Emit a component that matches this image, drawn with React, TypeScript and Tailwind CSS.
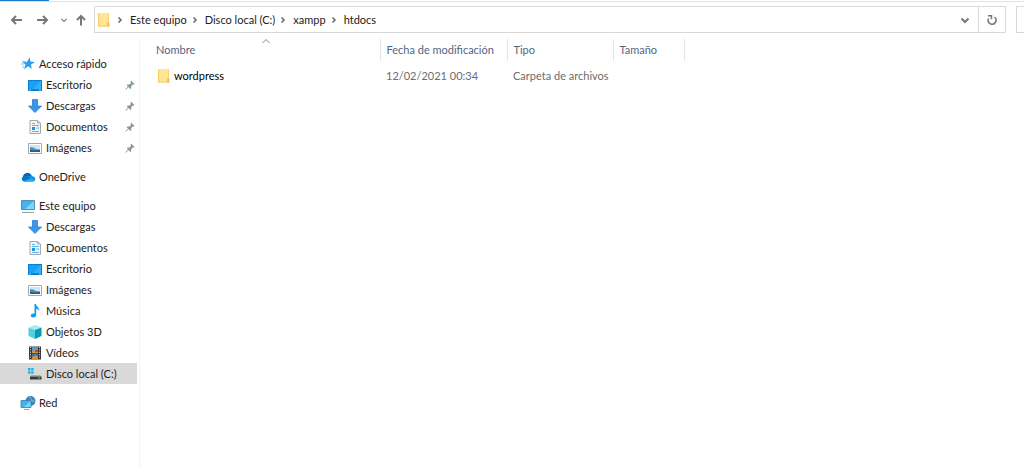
import React from 'react';

type IconName =
  | 'star' | 'desktop' | 'download' | 'document' | 'picture' | 'cloud' | 'computer'
  | 'music' | 'cube' | 'video' | 'drive' | 'network' | 'folder';

interface NavItem {
  label: string;
  icon: IconName;
  pinned?: boolean;
  selected?: boolean;
}

interface NavGroup {
  root: NavItem;
  items: NavItem[];
}

const groups: NavGroup[] = [
  {
    root: { label: 'Acceso rápido', icon: 'star' },
    items: [
      { label: 'Escritorio', icon: 'desktop', pinned: true },
      { label: 'Descargas', icon: 'download', pinned: true },
      { label: 'Documentos', icon: 'document', pinned: true },
      { label: 'Imágenes', icon: 'picture', pinned: true },
    ],
  },
  { root: { label: 'OneDrive', icon: 'cloud' }, items: [] },
  {
    root: { label: 'Este equipo', icon: 'computer' },
    items: [
      { label: 'Descargas', icon: 'download' },
      { label: 'Documentos', icon: 'document' },
      { label: 'Escritorio', icon: 'desktop' },
      { label: 'Imágenes', icon: 'picture' },
      { label: 'Música', icon: 'music' },
      { label: 'Objetos 3D', icon: 'cube' },
      { label: 'Vídeos', icon: 'video' },
      { label: 'Disco local (C:)', icon: 'drive', selected: true },
    ],
  },
  { root: { label: 'Red', icon: 'network' }, items: [] },
];

const crumbs = ['Este equipo', 'Disco local (C:)', 'xampp', 'htdocs'];

const shapes: Record<IconName, React.ReactNode> = {
  star: (
    <>
      <path d="M9.800 1.500l.7 4.100 4.500.6-4 2.300.8 4.500-3.600-2.700-4.200 2.900 1.600-4.700-3.100-2.300 4.300-.3z" fill="#2b9fea" />
      <path d="M2 5.500h3.500M1 8h3M2 11h2" stroke="#74c3f5" />
    </>
  ),
  desktop: (
    <>
      <path d="M1 3h14v11H1z" fill="#087fd3" />
      <path d="M2 4h12v8H2z" fill="#1ba1f3" />
      <path d="M14 4v8H6z" fill="#35b1fa" />
      <path d="M2 13h2M12 13h2" stroke="#8ad4ff" />
    </>
  ),
  download: <path d="M5.500 1.500h5V8h4L8 14.500 1.500 8h4z" fill="#3a96e8" stroke="#2581d2" strokeWidth=".8" />,
  document: (
    <>
      <path d="M3 1.500h7.500L13.500 4v10.500H3z" fill="#f1f5f8" stroke="#a2aab0" />
      <path d="M10.500 1.500V4h3" fill="none" stroke="#a2aab0" />
      <path d="M5 4.500h3M5 6.500h7M9 9H12M5 12.500h7" stroke="#5fb7e8" />
      <path d="M5 8h3v3H5z" fill="#2790d2" />
    </>
  ),
  picture: (
    <>
      <path d="M1.500 3.500h13v10h-13z" fill="#fff" stroke="#a2a8ad" />
      <path d="M3 5h10v7H3z" fill="#cfe6f5" />
      <path d="M3 7l3 .5L9 9l4 .5V12H3z" fill="#4b8fb8" />
      <path d="M3 10l5 .5 5-.5v2H3z" fill="#245d86" />
    </>
  ),
  cloud: (
    <>
      <path d="M3 9a4.500 4.500 0 018-3.500L13 9z" fill="#0c64bd" />
      <path d="M4 7.500a3 3 0 00-.2 5h8.700a2.500 2.500 0 00.4-5 3.800 3.800 0 00-4-.3z" fill="#1590df" />
      <path d="M3 7.500A2.700 2.700 0 003 12h3l5-2.500-4-2.400z" fill="#0875cc" />
      <path d="M4 12.200L11 9l3.800 2c-.6 1-1.300 1.500-2.300 1.500H4z" fill="#28a8ea" />
    </>
  ),
  computer: (
    <>
      <path d="M1.500 2.500h13v9h-13z" fill="#42b4f0" stroke="#5c8eaa" />
      <path d="M14 3v8H5z" fill="#82d4fa" />
      <path d="M2 14.500h12" stroke="#8ba3b2" />
    </>
  ),
  music: <path d="M7.500 1H9c.3 2.700 3.800 3.400 3.200 7.500-.6-1.700-1.700-2.400-3-2.700v6c0 1.700-1.200 2.800-3 2.800-1.500 0-2.400-.8-2.400-2 0-1.500 1.700-2.500 3.700-2.100z" fill="#149bf0" />,
  cube: (
    <>
      <path d="M1.500 3.500L8 1l6.500 2.500L8 6z" fill="#a4edf3" />
      <path d="M1.500 3.500L8 6v9l-6.500-3z" fill="#55cfde" />
      <path d="M14.500 3.500L8 6v9l6.500-3z" fill="#079bb5" />
    </>
  ),
  video: (
    <>
      <path d="M2 1.500h12v13H2z" fill="#353b40" />
      <path d="M5 2h6v6H5z" fill="#5097dc" />
      <path d="M5 8.500h6V14H5z" fill="#3574ae" />
      <path d="M5 6l3-2 3 3v1H5zM5 12l4-2 2 2v2H5z" fill="#d39335" />
      <path d="M8 5h3v2H8z" fill="#bd4d3c" />
      <path d="M3.500 2v12M12.500 2v12" stroke="#d5dade" strokeDasharray="1 1.400" />
    </>
  ),
  drive: (
    <>
      <path d="M1 2h2.500v2.500H1zM4.200 2h2.500v2.500H4.200zM1 5.200h2.500v2.500H1zM4.200 5.200h2.500v2.500H4.200z" fill="#18b5ed" />
      <path d="M4 9h9l1.500 1.500H3z" fill="#a9adb0" />
      <path d="M3 10.500h11.500v3H3z" fill="#373b3e" />
      <path d="M11 12h2" stroke="#5bd45d" />
    </>
  ),
  network: (
    <>
      <circle cx="10.500" cy="6" r="5" fill="#3a87b8" />
      <path d="M10 1.500c-1 2 3 2 1 4l3.500 1" stroke="#8fc4df" fill="none" />
      <path d="M1 5.500h10v7H1z" fill="#3fb3f1" stroke="#397eaa" strokeWidth=".8" />
      <path d="M10.500 6v6H4z" fill="#7dd1f8" />
      <path d="M4 14.500h5" stroke="#8fa7b5" />
    </>
  ),
  folder: (
    <>
      <path d="M2 1h11v13.500H2z" fill="#ffe595" />
      <path d="M2 1h1v13.500H2z" fill="#f3cf69" />
      <path d="M2 13.500h11v1H2z" fill="#f2cc61" />
      <path d="M11 10.500h2.500v4H11z" fill="#efc451" />
      <path d="M12 1h1v9.500h-1z" fill="#f7d675" />
    </>
  ),
};

function Icon({ name }: { name: IconName }) {
  return (
    <svg viewBox="0 0 16 16" className="h-4 w-4 shrink-0" aria-hidden="true">
      {shapes[name]}
    </svg>
  );
}

function Stroke({ d, className, width = 1.5 }: { d: string; className: string; width?: number }) {
  return (
    <svg viewBox="0 0 16 16" className={className} fill="none" stroke="currentColor" strokeWidth={width} aria-hidden="true">
      <path d={d} />
    </svg>
  );
}

const arrowLeft = 'M13 8H3M7 4L3 8l4 4';
const arrowRight = 'M2 8h10M8 4l4 4-4 4';
const arrowUp = 'M8 13.500V4M4 8l4-4 4 4';
const chevronDown = 'M4.500 6.500L8 10l3.500-3.500';
const chevronRight = 'M5.500 5.500L8 8l-2.500 2.500';
const chevronUp = 'M4.500 10L8 6.500l3.500 3.500';

function Pin() {
  return (
    <svg viewBox="0 0 10 10" className="ml-auto h-[10px] w-[10px] shrink-0" aria-hidden="true">
      <path d="M6 .5L9.500 4l-1 .8-.8-.2-1.500 1.700v1.900l-.8.8L1.800 5.400l.8-.8h1.900L6 3l-.4-1z" fill="#8796a1" />
      <path d="M3.700 6.500L.6 9.500" stroke="#8796a1" />
    </svg>
  );
}

function NavRow({ item, child }: { item: NavItem; child?: boolean }) {
  return (
    <a
      href="#"
      aria-current={item.selected ? 'page' : undefined}
      className={`flex h-[21px] items-center gap-[3px] pr-[2px] ${child ? 'pl-[27px]' : 'pl-5'} ${item.selected ? 'bg-[#d9d9d9]' : ''}`}
    >
      <Icon name={item.icon} />
      <span className="whitespace-nowrap">{item.label}</span>
      {item.pinned && <Pin />}
    </a>
  );
}

function Toolbar() {
  return (
    <header className="flex h-[27px] items-stretch text-[#777]">
      <div className="flex w-[94px] shrink-0 items-center pl-[9px]">
        <button aria-label="Atrás" className="w-[26px]"><Stroke d={arrowLeft} className="h-4 w-4" width={2} /></button>
        <button aria-label="Adelante" className="w-5"><Stroke d={arrowRight} className="h-4 w-4" width={2} /></button>
        <button aria-label="Ubicaciones recientes" className="w-[18px]"><Stroke d={chevronDown} className="mx-auto h-3 w-3" /></button>
        <button aria-label="Subir" className="w-4"><Stroke d={arrowUp} className="h-4 w-4" width={2} /></button>
      </div>
      <div className="flex min-w-0 flex-1 border border-[#d9d9d9]">
        <nav aria-label="Ruta" className="flex min-w-0 flex-1 items-center pl-px text-[#222]">
          <Icon name="folder" />
          {crumbs.map(crumb => (
            <React.Fragment key={crumb}>
              <Stroke d={chevronRight} className="mx-px h-4 w-4 shrink-0 text-[#666]" />
              <a href="#" className="whitespace-nowrap">{crumb}</a>
            </React.Fragment>
          ))}
        </nav>
        <button aria-label="Ubicaciones anteriores" className="flex w-[26px] items-center justify-center">
          <Stroke d={chevronDown} className="h-4 w-4" width={2} />
        </button>
        <button aria-label="Actualizar" className="flex w-[27px] items-center justify-center border-l border-[#d9d9d9]">
          <svg viewBox="0 0 12 12" className="h-3 w-3" fill="none" stroke="currentColor" strokeWidth="1.5" aria-hidden="true">
            <path d="M8.500 3.200A3.900 3.900 0 112.600 4.500M2 1.800h3.500v3.500" />
          </svg>
        </button>
      </div>
      <input aria-label="Buscar" className="ml-[10px] w-2 border border-r-0 border-[#d9d9d9]" />
    </header>
  );
}

function FileTable() {
  return (
    <table className="w-[544px] table-fixed whitespace-nowrap text-left">
      <colgroup>
        <col className="w-[240px]" />
        <col className="w-[127px]" />
        <col className="w-[106px]" />
        <col className="w-[71px]" />
      </colgroup>
      <thead className="text-[#53657f]">
        <tr className="h-[22px]">
          <th className="relative border-r border-[#e5e5e5] pl-4 font-normal">
            Nombre
            <Stroke d={chevronUp} className="absolute top-[-6px] left-[118px] h-4 w-4 text-[#888]" width={1} />
          </th>
          <th className="border-r border-[#e5e5e5] pl-[6px] font-normal">Fecha de modificación</th>
          <th className="border-r border-[#e5e5e5] pl-[6px] font-normal">Tipo</th>
          <th className="border-r border-[#e5e5e5] pl-[6px] font-normal">Tamaño</th>
        </tr>
      </thead>
      <tbody className="text-[#6d6d6d]">
        <tr className="h-[29px]">
          <td className="pl-4">
            <a href="#" className="flex items-center gap-[2px] text-black">
              <Icon name="folder" />
              wordpress
            </a>
          </td>
          <td className="pl-[6px]">12/02/2021 00:34</td>
          <td className="pl-[6px]">Carpeta de archivos</td>
          <td />
        </tr>
      </tbody>
    </table>
  );
}

export default function App() {
  return (
    <div className="flex min-h-screen flex-col bg-white font-[Lato,sans-serif] text-[11px] leading-4 text-[#222]">
      <div className="mb-1 border-b border-[#e2e2e2]">
        <div className="h-px w-[49px] bg-[#1979ca]" />
      </div>
      <Toolbar />
      <div className="flex flex-1 pt-[6px]">
        <aside className="w-[140px] shrink-0 border-r border-[#f3f3f3] pt-[14px]">
          <nav aria-label="Carpetas" className="flex flex-col gap-2 pr-[2px]">
            {groups.map(group => (
              <div key={group.root.label}>
                <NavRow item={group.root} />
                {group.items.map(item => (
                  <NavRow key={item.label} item={item} child />
                ))}
              </div>
            ))}
          </nav>
        </aside>
        <main className="min-w-0 flex-1">
          <FileTable />
        </main>
      </div>
    </div>
  );
}
